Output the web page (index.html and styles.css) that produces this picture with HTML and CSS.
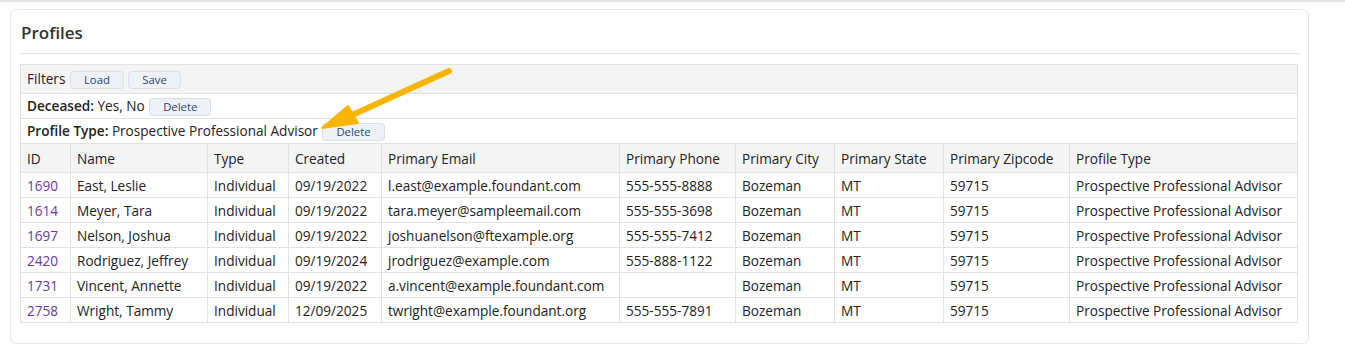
FILE: index.html
```html
<!DOCTYPE html>
<html>
<head>
<meta charset="utf-8">
<link rel="stylesheet" href="styles.css">
</head>
<body>
<div class="topbar"></div>
<div class="card">
  <h2 class="title">Profiles</h2>
  <div class="tablewrap">
    <table class="grid">
      <colgroup>
        <col style="width:50px"><col style="width:137px"><col style="width:81px"><col style="width:93px"><col style="width:238px"><col style="width:116px"><col style="width:99px"><col style="width:109px"><col style="width:126px"><col style="width:228px">
      </colgroup>
      <tbody>
        <tr class="filters"><td colspan="10">Filters <button class="btn">Load</button> <button class="btn">Save</button></td></tr>
        <tr class="filter"><td colspan="10"><b>Deceased:</b> Yes, No <button class="btn">Delete</button></td></tr>
        <tr class="filter"><td colspan="10"><b>Profile Type:</b> Prospective Professional Advisor <button class="btn">Delete</button></td></tr>
        <tr class="head"><th>ID</th><th>Name</th><th>Type</th><th>Created</th><th>Primary Email</th><th>Primary Phone</th><th>Primary City</th><th>Primary State</th><th>Primary Zipcode</th><th>Profile Type</th></tr>
        <tr><td><a class="id">1690</a></td><td>East, Leslie</td><td>Individual</td><td>09/19/2022</td><td>l.east@example.foundant.com</td><td>555-555-8888</td><td>Bozeman</td><td>MT</td><td>59715</td><td>Prospective Professional Advisor</td></tr>
        <tr><td><a class="id">1614</a></td><td>Meyer, Tara</td><td>Individual</td><td>09/19/2022</td><td>tara.meyer@sampleemail.com</td><td>555-555-3698</td><td>Bozeman</td><td>MT</td><td>59715</td><td>Prospective Professional Advisor</td></tr>
        <tr><td><a class="id">1697</a></td><td>Nelson, Joshua</td><td>Individual</td><td>09/19/2022</td><td>joshuanelson@ftexample.org</td><td>555-555-7412</td><td>Bozeman</td><td>MT</td><td>59715</td><td>Prospective Professional Advisor</td></tr>
        <tr><td><a class="id">2420</a></td><td>Rodriguez, Jeffrey</td><td>Individual</td><td>09/19/2024</td><td>jrodriguez@example.com</td><td>555-888-1122</td><td>Bozeman</td><td>MT</td><td>59715</td><td>Prospective Professional Advisor</td></tr>
        <tr><td><a class="id">1731</a></td><td>Vincent, Annette</td><td>Individual</td><td>09/19/2022</td><td>a.vincent@example.foundant.com</td><td></td><td>Bozeman</td><td>MT</td><td>59715</td><td>Prospective Professional Advisor</td></tr>
        <tr><td><a class="id">2758</a></td><td>Wright, Tammy</td><td>Individual</td><td>12/09/2025</td><td>twright@example.foundant.org</td><td>555-555-7891</td><td>Bozeman</td><td>MT</td><td>59715</td><td>Prospective Professional Advisor</td></tr>
      </tbody>
    </table>
    <svg class="arrow" width="150" height="80" viewBox="0 0 150 80">
      <line x1="139" y1="11" x2="40" y2="56" stroke="#f7b500" stroke-width="6" stroke-linecap="round"/>
      <polygon points="12,68 38,46 48,63" fill="#f7b500" stroke="#f7b500" stroke-width="2" stroke-linejoin="round"/>
    </svg>
  </div>
</div>
</body>
</html>
```
FILE: styles.css
```css
html, body {
  margin: 0;
  padding: 0;
  background: #fff;
}
body {
  font-family: "Open Sans", "Liberation Sans", sans-serif;
  font-size: 13.6px;
  color: #222;
}
.topbar {
  height: 2px;
  background: #e4e4e4;
}
.card {
  margin: 7px 36px 0 10px;
  border: 1px solid #e3e6ec;
  border-radius: 7px;
  padding: 0 9px 20px 9px;
  box-shadow: 0 1px 2px rgba(0,0,0,0.05);
}
.title {
  margin: 0;
  padding: 11px 0 0 1px;
  height: 32px;
  font-size: 17px;
  font-weight: 600;
  color: #333;
  border-bottom: 1px solid #e1e5ec;
  margin-bottom: 10px;
}
.tablewrap {
  position: relative;
}
.grid {
  width: 1278px;
  border-collapse: collapse;
  table-layout: fixed;
}
.grid td, .grid th {
  border: 1px solid #e2e2e2;
  padding: 0 6px;
  height: 24px;
  text-align: left;
  white-space: nowrap;
  overflow: hidden;
}
.grid th {
  font-weight: normal;
  background: #f5f5f5;
  height: 28px;
}
.filters td {
  background: #f4f4f4;
  height: 28px;
}
.filter td {
  height: 24px;
}
.filter b {
  font-weight: 600;
}
.btn {
  font-family: inherit;
  font-size: 11.3px;
  color: #2b4470;
  background: #eef2f7;
  border: 1px solid #d8dfe9;
  border-radius: 4px;
  padding: 0 13px;
  height: 18px;
  line-height: 16px;
  margin-left: 1px;
  vertical-align: middle;
}
.filter .btn {
  padding: 0 13px;
}
.id {
  color: #6a3aa0;
}
.arrow {
  position: absolute;
  left: 290px;
  top: -4px;
}
```
